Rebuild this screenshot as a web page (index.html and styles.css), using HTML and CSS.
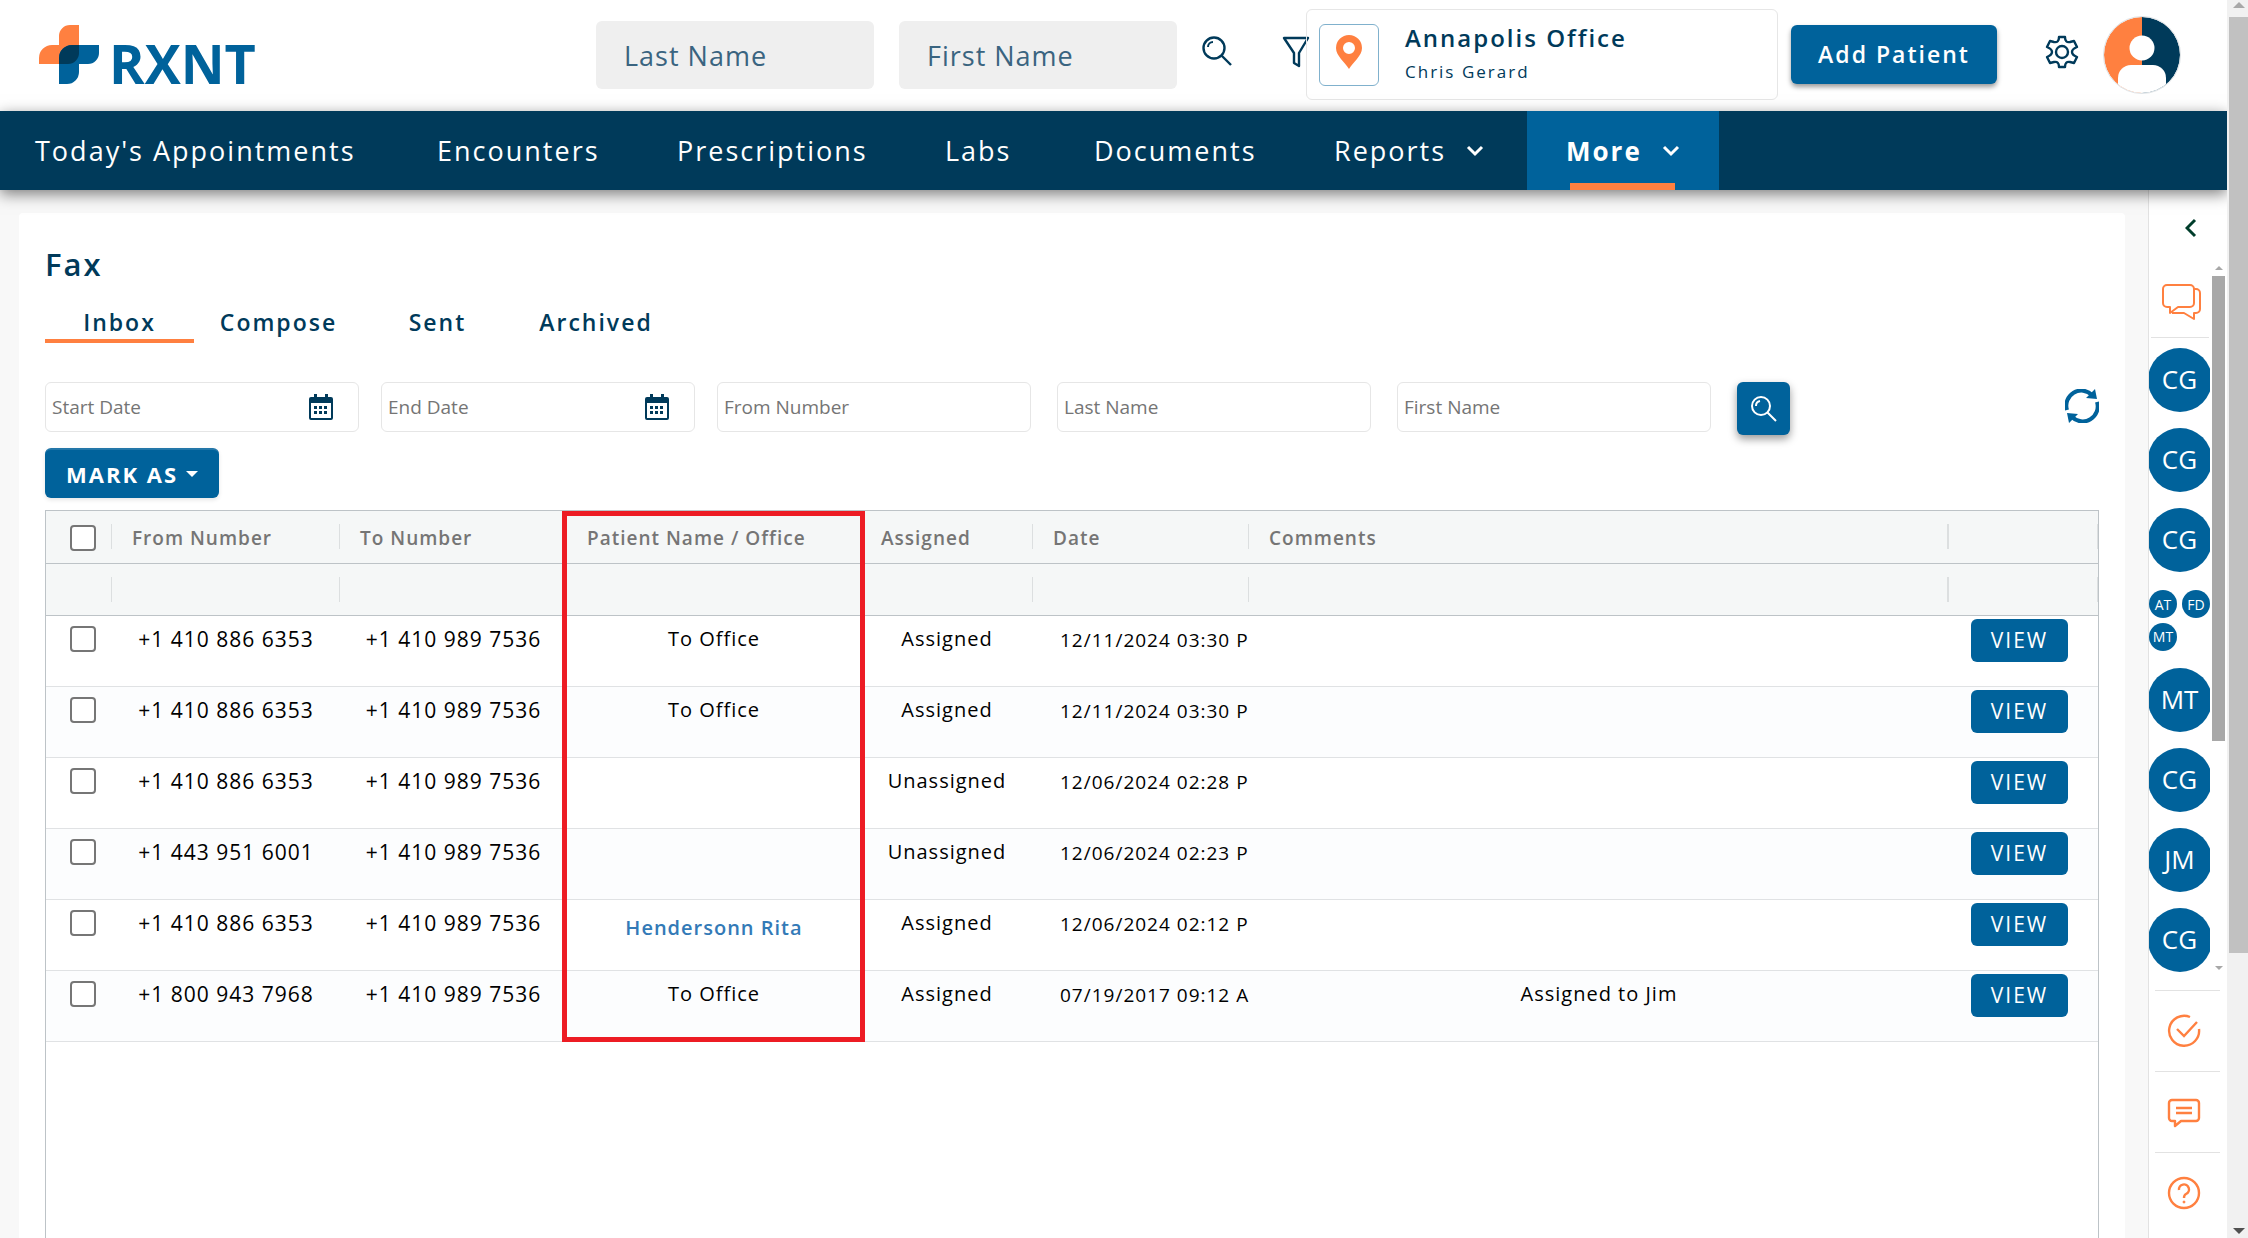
FILE: index.html
```html
<!DOCTYPE html>
<html lang="en">
<head>
    <meta charset="utf-8">
    <title>RXNT - Fax</title>
    <link rel="stylesheet" href="styles.css">
</head>
<body>
    <div class="app">
        <header class="topbar">
            <a class="logo" href="#">
                <svg class="logo-mark" viewBox="0 0 60 59" aria-hidden="true">
                    <path fill="#ff8040" d="M40 0v25a14 14 0 0 1-14 14H0V33a13 13 0 0 1 13-13h7V11A11 11 0 0 1 31 0z"/>
                    <path fill="#00629b" d="M20 59V33a13 13 0 0 1 13-13h27v8a11 11 0 0 1-11 11h-9v8a12 12 0 0 1-12 12z"/>
                    <path fill="#003a5a" d="M20 39V33a13 13 0 0 1 13-13h7v8a11 11 0 0 1-11 11z"/>
                </svg>
                <span>RXNT</span>
            </a>

            <form class="patient-search">
                <input type="text" placeholder="Last Name" aria-label="Patient last name">
                <input type="text" placeholder="First Name" aria-label="Patient first name">
                <button type="button" class="icon-button" aria-label="Search">
                    <svg width="30" height="30" viewBox="0 0 30 30" fill="none" stroke="#003a5a" stroke-width="2.4">
                        <circle cx="12" cy="12" r="10.5"/>
                        <path d="M6 11a5 5 0 0 1 5-5" stroke-width="2"/>
                        <path d="M19 19l10 10"/>
                    </svg>
                </button>
                <button type="button" class="icon-button filter-button" aria-label="Filter">
                    <svg width="28" height="32" viewBox="0 0 28 32" fill="none" stroke="#003a5a" stroke-width="2.4" stroke-linejoin="round">
                        <path d="M2 2h24l-9 15v13l-5-3V17z"/>
                    </svg>
                </button>
            </form>

            <div class="office">
                <button type="button" class="pin" aria-label="Change office">
                    <svg width="26" height="34" viewBox="0 0 26 34">
                        <path fill="#ff8040" fill-rule="evenodd" d="M13 0a13 13 0 0 1 13 13c0 8-9 14-13 21C9 27 0 21 0 13A13 13 0 0 1 13 0zm0 7a6 6 0 1 0 0 12 6 6 0 0 0 0-12z"/>
                    </svg>
                </button>
                <div>
                    <div class="office-name">Annapolis Office</div>
                    <div class="office-user">Chris Gerard</div>
                </div>
            </div>

            <button type="button" class="add-patient">Add Patient</button>

            <button type="button" class="icon-button settings" aria-label="Settings">
                <svg width="34" height="34" viewBox="0 0 34 34" fill="none" stroke="#003a5a" stroke-width="2.4" stroke-linejoin="round">
                    <path d="M14 2h6q0 6 5 5l4-1 3 6q-5 2-5 5t5 5l-3 6-4-1q-5-1-5 5h-6q0-6-5-5l-4 1-3-6q5-2 5-5t-5-5l3-6 4 1q5 1 5-5z"/>
                    <circle cx="17" cy="17" r="6"/>
                </svg>
            </button>
            <button type="button" class="icon-button profile" aria-label="Profile">
                <svg width="78" height="80" viewBox="0 0 78 80">
                    <clipPath id="face"><circle cx="39" cy="40" r="38"/></clipPath>
                    <g clip-path="url(#face)">
                        <rect width="39" height="80" fill="#ff8040"/>
                        <rect x="39" width="39" height="80" fill="#003a5a"/>
                        <circle cx="39" cy="33" r="12.5" fill="#fff"/>
                        <path d="M15 90V63a13 13 0 0 1 13-13h22a13 13 0 0 1 13 13v27z" fill="#fff"/>
                    </g>
                    <circle cx="39" cy="40" r="38.5" fill="none" stroke="#dfe3e6"/>
                </svg>
            </button>
        </header>

        <nav class="menu">
            <a href="#">Today's Appointments</a>
            <a href="#">Encounters</a>
            <a href="#">Prescriptions</a>
            <a href="#">Labs</a>
            <a href="#">Documents</a>
            <a href="#">Reports
                <svg class="chevron" viewBox="0 0 18 12"><path d="M2 2l7 7 7-7"/></svg>
            </a>
            <a href="#" class="active">More
                <svg class="chevron" viewBox="0 0 18 12"><path d="M2 2l7 7 7-7"/></svg>
            </a>
        </nav>

        <div class="content">
            <main class="card">
                <h1>Fax</h1>

                <div class="tabs">
                    <a href="#" class="active">Inbox</a>
                    <a href="#">Compose</a>
                    <a href="#">Sent</a>
                    <a href="#">Archived</a>
                </div>

                <form class="filters">
                    <label class="date-field">
                        <input type="text" placeholder="Start Date" aria-label="Start Date">
                        <svg width="24" height="26" viewBox="0 0 24 26"><path fill="#003a5a" fill-rule="evenodd" d="M5 0h3v3h8V0h3v3h3a2 2 0 0 1 2 2v19a2 2 0 0 1-2 2H2a2 2 0 0 1-2-2V5a2 2 0 0 1 2-2h3zM2 9v15h20V9zm3 3h3v3H5zm5 0h3v3h-3zm5 0h3v3h-3zM5 17h3v3H5zm5 0h3v3h-3zm5 0h3v3h-3z"/></svg>
                    </label>
                    <label class="date-field">
                        <input type="text" placeholder="End Date" aria-label="End Date">
                        <svg width="24" height="26" viewBox="0 0 24 26"><path fill="#003a5a" fill-rule="evenodd" d="M5 0h3v3h8V0h3v3h3a2 2 0 0 1 2 2v19a2 2 0 0 1-2 2H2a2 2 0 0 1-2-2V5a2 2 0 0 1 2-2h3zM2 9v15h20V9zm3 3h3v3H5zm5 0h3v3h-3zm5 0h3v3h-3zM5 17h3v3H5zm5 0h3v3h-3zm5 0h3v3h-3z"/></svg>
                    </label>
                    <div class="text-fields">
                        <input type="text" placeholder="From Number" aria-label="From Number">
                        <input type="text" placeholder="Last Name" aria-label="Last Name">
                        <input type="text" placeholder="First Name" aria-label="First Name">
                        <button type="button" class="search" aria-label="Search faxes">
                            <svg width="26" height="26" viewBox="0 0 26 26" fill="none" stroke="#fff" stroke-width="2">
                                <circle cx="10" cy="10" r="9"/>
                                <path d="M5 10a5 5 0 0 1 4-5M16 16l9 9"/>
                            </svg>
                        </button>
                    </div>
                    <button type="button" class="icon-button refresh" aria-label="Refresh">
                        <svg width="34" height="34" viewBox="0 0 34 34" fill="none" stroke="#00629b" stroke-width="4">
                            <path d="M2 21A15 15 0 0 1 27 6M32 13A15 15 0 0 1 7 28"/>
                            <path fill="#00629b" stroke="none" d="M30 0l2 10-11-1zM4 34L2 24l11 1z"/>
                        </svg>
                    </button>
                </form>

                <button type="button" class="mark-as">MARK AS<span class="caret"></span></button>

                <div class="grid">
                    <table>
                        <colgroup>
                            <col class="col-check">
                            <col class="col-from">
                            <col class="col-to">
                            <col class="col-patient">
                            <col class="col-assigned">
                            <col class="col-date">
                            <col>
                            <col class="col-action">
                        </colgroup>
                        <thead>
                            <tr>
                                <th><input type="checkbox" aria-label="Select all"></th>
                                <th>From Number</th>
                                <th>To Number</th>
                                <th>Patient Name / Office</th>
                                <th>Assigned</th>
                                <th>Date</th>
                                <th class="wide">Comments</th>
                                <th></th>
                            </tr>
                            <tr>
                                <td></td>
                                <td></td>
                                <td></td>
                                <td></td>
                                <td></td>
                                <td></td>
                                <td class="wide"></td>
                                <td></td>
                            </tr>
                        </thead>
                        <tbody>
                            <tr>
                                <td><input type="checkbox" aria-label="Select fax 1"></td>
                                <td class="phone">+1 410 886 6353</td>
                                <td class="phone">+1 410 989 7536</td>
                                <td>To Office</td>
                                <td>Assigned</td>
                                <td class="date">12/11/2024 03:30 PM</td>
                                <td></td>
                                <td class="action"><button type="button">VIEW</button></td>
                            </tr>
                            <tr>
                                <td><input type="checkbox" aria-label="Select fax 2"></td>
                                <td class="phone">+1 410 886 6353</td>
                                <td class="phone">+1 410 989 7536</td>
                                <td>To Office</td>
                                <td>Assigned</td>
                                <td class="date">12/11/2024 03:30 PM</td>
                                <td></td>
                                <td class="action"><button type="button">VIEW</button></td>
                            </tr>
                            <tr>
                                <td><input type="checkbox" aria-label="Select fax 3"></td>
                                <td class="phone">+1 410 886 6353</td>
                                <td class="phone">+1 410 989 7536</td>
                                <td></td>
                                <td>Unassigned</td>
                                <td class="date">12/06/2024 02:28 PM</td>
                                <td></td>
                                <td class="action"><button type="button">VIEW</button></td>
                            </tr>
                            <tr>
                                <td><input type="checkbox" aria-label="Select fax 4"></td>
                                <td class="phone">+1 443 951 6001</td>
                                <td class="phone">+1 410 989 7536</td>
                                <td></td>
                                <td>Unassigned</td>
                                <td class="date">12/06/2024 02:23 PM</td>
                                <td></td>
                                <td class="action"><button type="button">VIEW</button></td>
                            </tr>
                            <tr>
                                <td><input type="checkbox" aria-label="Select fax 5"></td>
                                <td class="phone">+1 410 886 6353</td>
                                <td class="phone">+1 410 989 7536</td>
                                <td><a href="#" class="patient">Hendersonn Rita</a></td>
                                <td>Assigned</td>
                                <td class="date">12/06/2024 02:12 PM</td>
                                <td></td>
                                <td class="action"><button type="button">VIEW</button></td>
                            </tr>
                            <tr>
                                <td><input type="checkbox" aria-label="Select fax 6"></td>
                                <td class="phone">+1 800 943 7968</td>
                                <td class="phone">+1 410 989 7536</td>
                                <td>To Office</td>
                                <td>Assigned</td>
                                <td class="date">07/19/2017 09:12 AM</td>
                                <td>Assigned to Jim</td>
                                <td class="action"><button type="button">VIEW</button></td>
                            </tr>
                        </tbody>
                    </table>
                    <div class="highlight"></div>
                </div>
            </main>

            <aside class="side">
                <button type="button" class="icon-button collapse" aria-label="Expand panel">
                    <svg width="12" height="20" viewBox="0 0 12 20" fill="none" stroke="#003d2b" stroke-width="3"><path d="M10 2l-8 8 8 8"/></svg>
                </button>
                <div class="chats">
                    <div class="chat-list">
                        <div class="chat-icon">
                            <svg width="40" height="38" viewBox="0 0 40 38" fill="none" stroke="#ff8040" stroke-width="2" stroke-linejoin="round">
                                <path d="M5 2h23a4 4 0 0 1 4 4v14a4 4 0 0 1-4 4H16l-8 6v-6H5a4 4 0 0 1-4-4V6a4 4 0 0 1 4-4z"/>
                                <path d="M32 6h2a4 4 0 0 1 4 4v16a4 4 0 0 1-4 4h-2v6l-10-6H10"/>
                            </svg>
                        </div>
                        <div class="avatar">CG</div>
                        <div class="avatar">CG</div>
                        <div class="avatar">CG</div>
                        <div class="group">
                            <span>AT</span>
                            <span>FD</span>
                            <span>MT</span>
                        </div>
                        <div class="avatar">MT</div>
                        <div class="avatar">CG</div>
                        <div class="avatar">JM</div>
                        <div class="avatar">CG</div>
                    </div>
                    <div class="scroll scroll-small">
                        <span class="up"></span>
                        <span class="thumb"></span>
                        <span class="down"></span>
                    </div>
                </div>
                <div class="tools">
                    <button type="button" class="icon-button" aria-label="Tasks">
                        <svg width="34" height="34" viewBox="0 0 34 34" fill="none" stroke="#ff8040" stroke-width="2.4">
                            <path d="M23 3A15 15 0 1 0 32 15"/>
                            <path d="M10 15l7 7L30 8"/>
                        </svg>
                    </button>
                    <button type="button" class="icon-button" aria-label="Messages">
                        <svg width="34" height="34" viewBox="0 0 34 34" fill="none" stroke="#ff8040" stroke-width="2.4" stroke-linejoin="round">
                            <path d="M5 5h24a3 3 0 0 1 3 3v15a3 3 0 0 1-3 3H14l-6 5v-5H5a3 3 0 0 1-3-3V8a3 3 0 0 1 3-3z"/>
                            <path d="M9 13h16M9 18h16"/>
                        </svg>
                    </button>
                    <button type="button" class="icon-button" aria-label="Help">
                        <svg width="34" height="34" viewBox="0 0 34 34" fill="none" stroke="#ff8040" stroke-width="2.4">
                            <circle cx="17" cy="17" r="15"/>
                            <path d="M12 14a5 5 0 1 1 7 4q-2 1-2 4"/>
                            <circle cx="17" cy="26" r="1" fill="#ff8040" stroke-width="1"/>
                        </svg>
                    </button>
                </div>
            </aside>
        </div>
    </div>

    <div class="scroll scroll-page">
        <span class="up"></span>
        <span class="thumb"></span>
        <span class="down"></span>
    </div>
</body>
</html>
```
FILE: styles.css
```css
* {
    box-sizing: border-box;
}

body {
    display: flex;
    height: 100vh;
    margin: 0;
    overflow: hidden;
    background: #fff;
    color: #003a5a;
    font-family: "Open Sans", "Noto Sans", sans-serif;
}

a {
    color: inherit;
    text-decoration: none;
}

button,
input {
    font-family: inherit;
    margin: 0;
}

.icon-button {
    display: flex;
    padding: 0;
    border: 0;
    background: none;
}

.app {
    display: flex;
    flex: 1;
    flex-direction: column;
    min-width: 0;
}

/* top bar */
.topbar {
    display: flex;
    align-items: center;
    height: 111px;
    padding: 0 46px 2px 39px;
}

.logo {
    display: flex;
    align-items: flex-end;
    gap: 10px;
    color: #00629b;
}

.logo-mark {
    width: 60px;
    height: 59px;
}

.logo span {
    font-size: 54px;
    font-weight: 700;
    line-height: 42px;
}

.patient-search {
    display: flex;
    gap: 25px;
    margin-left: auto;
}

.patient-search input {
    width: 278px;
    height: 68px;
    padding: 2px 28px 0;
    border: 0;
    border-radius: 6px;
    background: #efefef;
    font-size: 27px;
    letter-spacing: 1px;
}

.patient-search input::placeholder {
    color: #3a6480;
}

.patient-search .icon-button {
    padding-top: 15px;
}

.filter-button {
    margin-left: 25px;
}

.office {
    display: flex;
    align-items: center;
    gap: 26px;
    width: 472px;
    height: 91px;
    margin-left: -4px;
    padding: 0 12px;
    border: 1px solid #e6e6e6;
    border-radius: 6px;
}

.pin {
    display: flex;
    align-items: center;
    justify-content: center;
    width: 60px;
    height: 62px;
    padding: 0 0 6px;
    border: 1px solid #80b1cd;
    border-radius: 6px;
    background: #fff;
}

.office-name {
    font-size: 24px;
    font-weight: 600;
    line-height: 34px;
    letter-spacing: 2px;
}

.office-user {
    font-size: 17px;
    font-weight: 500;
    line-height: 34px;
    letter-spacing: 2px;
}

.add-patient {
    width: 206px;
    height: 59px;
    margin-left: 13px;
    padding: 0 0 2px;
    border: 0;
    border-radius: 6px;
    background: #00629b;
    box-shadow: 0 3px 5px rgba(0, 0, 0, 0.4);
    color: #fff;
    font-size: 23px;
    font-weight: 600;
    letter-spacing: 2px;
}

.settings {
    margin: 0 24px 6px 48px;
}

/* main menu */
.menu {
    position: relative;
    z-index: 1;
    display: grid;
    grid-template-columns: 402px 240px 268px 149px 240px 228px 192px;
    height: 79px;
    background: #003a5a;
    box-shadow: 0 4px 14px rgba(0, 0, 0, 0.5);
    color: #fff;
    font-size: 27px;
    letter-spacing: 2px;
}

.menu a {
    display: flex;
    align-items: center;
    padding-left: 35px;
    white-space: nowrap;
}

.menu .active {
    position: relative;
    padding-left: 39px;
    background: #00629b;
    font-size: 26px;
    font-weight: 700;
}

.menu .active::after {
    content: "";
    position: absolute;
    left: 43px;
    right: 44px;
    bottom: 0;
    height: 7px;
    background: #ff8040;
}

.chevron {
    width: 18px;
    height: 12px;
    margin-left: 20px;
    fill: none;
    stroke: #fff;
    stroke-width: 3;
}

/* page body */
.content {
    display: flex;
    flex: 1;
    min-height: 0;
    background: #f8f8f8;
}

.card {
    display: flex;
    flex: 1;
    flex-direction: column;
    align-items: flex-start;
    min-width: 0;
    margin: 23px 23px 0 19px;
    padding: 30px 26px 0;
    border-radius: 4px 4px 0 0;
    background: #fff;
}

h1 {
    margin: 0;
    font-size: 31px;
    font-weight: 600;
    line-height: 42px;
    letter-spacing: 2px;
}

.tabs {
    display: flex;
    margin-top: 22px;
    font-size: 23px;
    font-weight: 600;
    line-height: 30px;
    letter-spacing: 2px;
    text-align: center;
}

.tabs a {
    width: 149px;
    height: 36px;
    border-bottom: 4px solid transparent;
}

.tabs a:nth-child(2) {
    width: 169px;
}

.tabs a:nth-child(4) {
    width: 168px;
}

.tabs .active {
    border-color: #ff8040;
}

.filters {
    display: flex;
    align-self: stretch;
    align-items: flex-start;
    gap: 22px;
    margin-top: 39px;
}

.filters input {
    width: 314px;
    height: 50px;
    padding: 0 6px;
    border: 1px solid #e6e6e6;
    border-radius: 6px;
    background: #fff;
    font-size: 19px;
}

.filters input::placeholder {
    color: #757575;
}

.date-field {
    display: flex;
    align-items: center;
}

.date-field svg {
    margin: 0 26px 0 -50px;
}

.text-fields {
    display: flex;
    gap: 26px;
}

.search {
    display: flex;
    align-items: center;
    justify-content: center;
    width: 53px;
    height: 53px;
    border: 0;
    border-radius: 6px;
    background: #00629b;
    box-shadow: 0 4px 8px rgba(0, 0, 0, 0.4);
}

.refresh {
    margin: 7px 0 0 auto;
}

.mark-as {
    display: flex;
    align-items: center;
    gap: 8px;
    height: 50px;
    margin-top: 13px;
    padding: 0 21px;
    border: 0;
    border-top: 2px solid #2477a9;
    border-radius: 6px;
    background: #00629b;
    box-shadow: 0 2px 4px rgba(0, 0, 0, 0.1);
    color: #fff;
    font-size: 22px;
    font-weight: 700;
    letter-spacing: 2px;
    line-height: 44px;
}

.caret {
    border: 6px solid transparent;
    border-top-color: #fff;
    border-bottom: 0;
}

/* fax table */
.grid {
    position: relative;
    flex: 1;
    align-self: stretch;
    margin-top: 12px;
    border: 1px solid #bdc3c7;
    border-bottom: 0;
}

table {
    width: 100%;
    border-collapse: collapse;
    table-layout: fixed;
    font-size: 20px;
    letter-spacing: 1px;
}

.col-check { width: 66px; }
.col-from { width: 228px; }
.col-to { width: 227px; }
.col-patient { width: 294px; }
.col-assigned { width: 172px; }
.col-date { width: 216px; }
.col-action { width: 149px; }

thead tr {
    height: 52px;
    border-bottom: 1px solid #bdc3c7;
    background: #f5f7f7;
}

/* short divider at the right edge of each header cell */
thead th,
thead td {
    padding: 3px 0 0 20px;
    background: linear-gradient(#dcdfe0, #dcdfe0) no-repeat right center / 1px 25px;
    color: #757575;
    font-weight: 600;
    font-size: 19px;
    text-align: left;
}

thead .wide {
    background-size: 2px 25px;
}

tbody tr {
    height: 71px;
    border-bottom: 1px solid #e0e2e4;
    color: #000;
}

tbody tr:nth-child(even) {
    background: #fcfdfe;
}

tbody td {
    padding: 9px 0 0;
    line-height: 28px;
    text-align: center;
    vertical-align: top;
}

input[type="checkbox"] {
    display: block;
    width: 26px;
    height: 26px;
    appearance: none;
    border: 2px solid #767676;
    border-radius: 4px;
    background: #fff;
}

thead th:first-child {
    padding-left: 24px;
}

tbody td:first-child {
    padding: 10px 0 0 24px;
}

tbody .phone {
    font-size: 21px;
}

tbody .date {
    padding: 10px 0 0 27px;
    overflow: hidden;
    font-size: 19px;
    text-align: left;
    white-space: nowrap;
}

tbody .action {
    padding: 3px 0 0 22px;
    text-align: left;
}

.action button {
    width: 97px;
    height: 43px;
    padding: 0;
    border: 0;
    border-radius: 6px;
    background: #00629b;
    color: #fff;
    font-size: 21px;
    letter-spacing: 2px;
}

.patient {
    display: block;
    padding-top: 5px;
    color: #337ab7;
    font-weight: 600;
}

.highlight {
    position: absolute;
    top: 0;
    left: 516px;
    width: 303px;
    height: 531px;
    border: 5px solid #ed1c24;
}

/* right panel */
.side {
    display: flex;
    flex-direction: column;
    width: 79px;
    border-left: 1px solid #e2e2e2;
    background: #fff;
}

.collapse {
    margin: 28px 30px 0 auto;
}

.chats {
    display: flex;
    justify-content: space-between;
    height: 712px;
    margin-top: 24px;
}

.chat-list {
    display: flex;
    flex-direction: column;
    align-items: center;
    gap: 16px;
    width: 61px;
    overflow: hidden;
}

.chat-icon {
    width: 58px;
    height: 76px;
    margin-bottom: -6px;
    padding: 21px 0 0 11px;
    border-bottom: 1px solid #e2e2e2;
}

.avatar,
.group span {
    display: flex;
    flex: none;
    align-items: center;
    justify-content: center;
    border-radius: 50%;
    background: #00629b;
    color: #fff;
}

.avatar {
    width: 64px;
    height: 64px;
    padding-bottom: 2px;
    font-size: 26px;
}

.group {
    display: flex;
    flex-wrap: wrap;
    justify-content: space-between;
    gap: 3px;
    width: 61px;
    height: 64px;
    padding-top: 2px;
}

.group span {
    width: 28px;
    height: 28px;
    font-size: 14px;
}

.tools {
    display: flex;
    flex-direction: column;
    padding: 0 7px 0 6px;
    margin-top: 16px;
}

.tools .icon-button {
    align-items: center;
    height: 81px;
    padding-left: 12px;
    border-top: 1px solid #e2e2e2;
}

/* scroll bars */
.scroll {
    display: flex;
    flex-direction: column;
    align-items: center;
}

.scroll .up,
.scroll .down {
    border: 4px solid transparent;
}

.scroll .up {
    border-top: 0;
    border-bottom-color: #a8a8a8;
}

.scroll .down {
    margin-top: auto;
    border-bottom: 0;
    border-top-color: #a8a8a8;
}

.scroll .thumb {
    align-self: stretch;
    margin-top: 6px;
    background: #a8a8a8;
}

.scroll-small {
    width: 13px;
    margin-right: 2px;
    padding: 4px 0;
}

.scroll-small .thumb {
    height: 465px;
}

.scroll-page {
    position: relative;
    z-index: 2;
    width: 21px;
    padding: 2px 0 4px 2px;
    background: #f1f1f1;
}

.scroll-page .up,
.scroll-page .down {
    border-width: 6px;
}

.scroll-page .up {
    border-top: 0;
}

.scroll-page .down {
    border-bottom: 0;
    border-top-color: #505050;
}

.scroll-page .thumb {
    height: 76%;
    margin-top: 9px;
    background: #c1c1c1;
}
```
